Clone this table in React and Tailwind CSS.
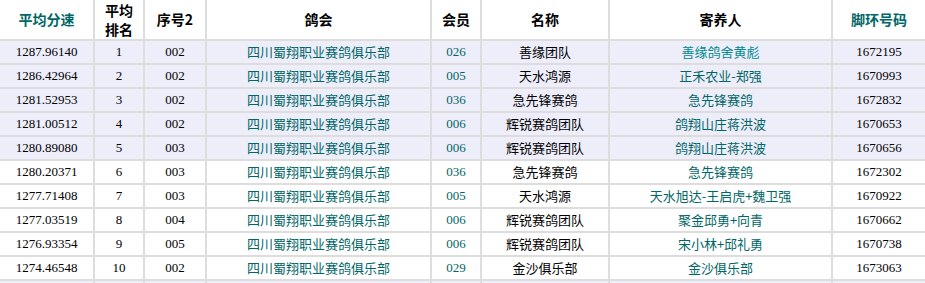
const rows = [
  ['1287.96140', '1', '002', '四川蜀翔职业赛鸽俱乐部', '026', '善缘团队', '善缘鸽舍黄彪', '1672195'],
  ['1286.42964', '2', '002', '四川蜀翔职业赛鸽俱乐部', '005', '天水鸿源', '正禾农业-郑强', '1670993'],
  ['1281.52953', '3', '002', '四川蜀翔职业赛鸽俱乐部', '036', '急先锋赛鸽', '急先锋赛鸽', '1672832'],
  ['1281.00512', '4', '002', '四川蜀翔职业赛鸽俱乐部', '006', '辉锐赛鸽团队', '鸽翔山庄蒋洪波', '1670653'],
  ['1280.89080', '5', '003', '四川蜀翔职业赛鸽俱乐部', '006', '辉锐赛鸽团队', '鸽翔山庄蒋洪波', '1670656'],
  ['1280.20371', '6', '003', '四川蜀翔职业赛鸽俱乐部', '036', '急先锋赛鸽', '急先锋赛鸽', '1672302'],
  ['1277.71408', '7', '003', '四川蜀翔职业赛鸽俱乐部', '005', '天水鸿源', '天水旭达-王启虎+魏卫强', '1670922'],
  ['1277.03519', '8', '004', '四川蜀翔职业赛鸽俱乐部', '006', '辉锐赛鸽团队', '聚金邱勇+向青', '1670662'],
  ['1276.93354', '9', '005', '四川蜀翔职业赛鸽俱乐部', '006', '辉锐赛鸽团队', '宋小林+邱礼勇', '1670738'],
  ['1274.46548', '10', '002', '四川蜀翔职业赛鸽俱乐部', '029', '金沙俱乐部', '金沙俱乐部', '1673063'],
];

const grid = 'grid grid-cols-[95px_50px_62px_225px_50px_128px_223px_92px]';
const cell = 'flex items-center justify-center border-r-2 border-b-2 border-[#dddddd] last:border-r-0';
const num = 'font-["Liberation_Serif",serif] text-[13px] text-black';
const cjk = 'font-["Noto_Sans_CJK_SC",sans-serif] text-[13px]';

export default function App() {
  return (
    <div className="w-[925px] h-[283px] overflow-hidden bg-white">
      <div className={`${grid} h-[41px] font-["Noto_Sans_CJK_SC",sans-serif] text-[14px] font-bold text-black`}>
        <div className={`${cell} text-[#006666]`}>平均分速</div>
        <div className={`${cell} flex-col leading-[19px]`}>
          <span>平均</span>
          <span>排名</span>
        </div>
        <div className={cell}>序号2</div>
        <div className={cell}>鸽会</div>
        <div className={cell}>会员</div>
        <div className={cell}>名称</div>
        <div className={cell}>寄养人</div>
        <div className={`${cell} text-[#006666]`}>脚环号码</div>
      </div>
      {rows.map((r, i) => (
        <div key={i} className={`${grid} h-[24px] ${i < 5 ? 'bg-[#eeeefb]' : 'bg-white'}`}>
          <div className={`${cell} ${num}`}>{r[0]}</div>
          <div className={`${cell} ${num}`}>{r[1]}</div>
          <div className={`${cell} ${num}`}>{r[2]}</div>
          <div className={`${cell} ${cjk} text-[#006666]`}>{r[3]}</div>
          <div className={`${cell} font-["Liberation_Serif",serif] text-[13px] text-[#006666]`}>{r[4]}</div>
          <div className={`${cell} ${cjk} text-black`}>{r[5]}</div>
          <div className={`${cell} ${cjk} ${i === 0 ? 'text-[#00898f]' : 'text-[#006666]'}`}>{r[6]}</div>
          <div className={`${cell} ${num}`}>{r[7]}</div>
        </div>
      ))}
      <div className={`${grid} h-[24px] bg-[#eeeefb]`}>
        {Array.from({ length: 8 }).map((_, j) => (
          <div key={j} className={cell} />
        ))}
      </div>
    </div>
  );
}
